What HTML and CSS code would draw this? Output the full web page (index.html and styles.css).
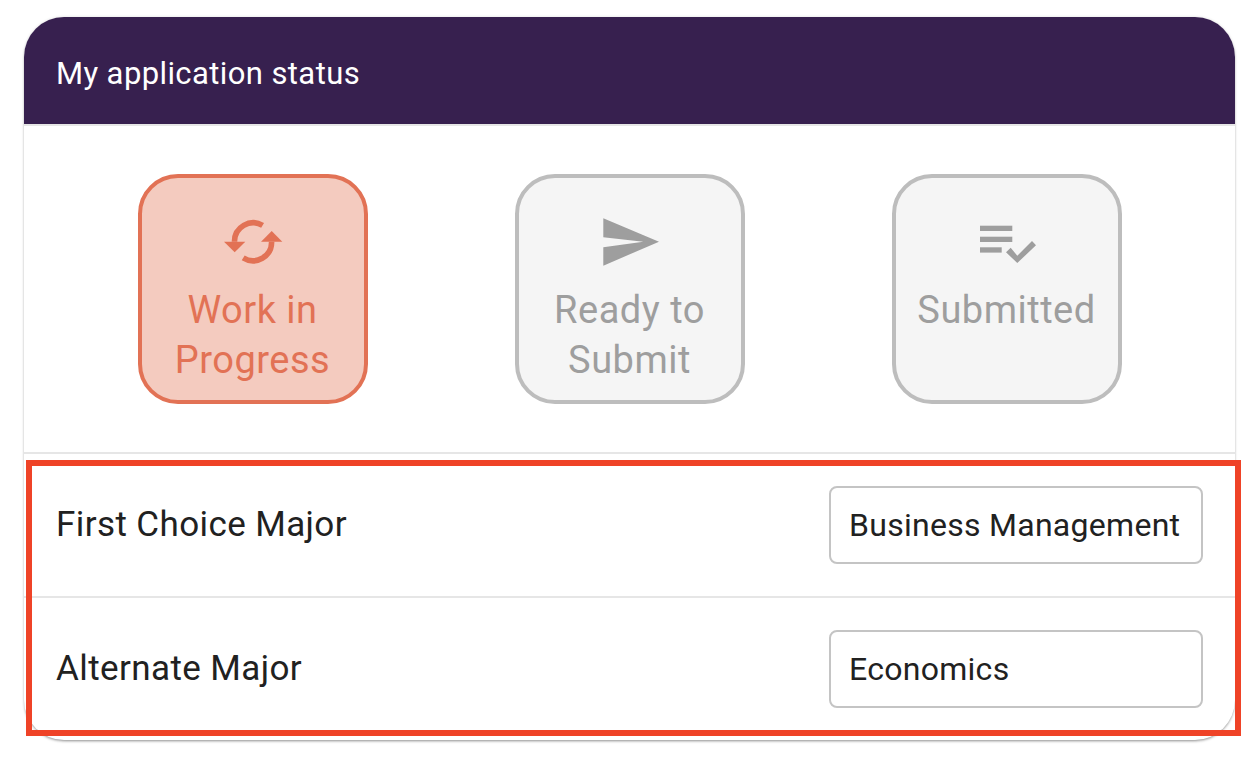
FILE: index.html
```html
<!DOCTYPE html>
<html lang="en">
<head>
<meta charset="utf-8">
<title>My application status</title>
<link rel="stylesheet" href="styles.css">
</head>
<body>
<section class="card">
  <header class="card-header">My application status</header>
  <div class="steps">
    <div class="step step-active">
      <svg class="step-icon" viewBox="0 0 60 60" aria-hidden="true">
        <path class="arc" d="M39.6 13.4A18.6 18.6 0 0 0 11.5 29.7"/>
        <path class="arc" d="M20.2 45.9A18.6 18.6 0 0 0 48.6 29.7"/>
        <polygon class="tip" points="1,29.7 22.3,29.7 11.7,40.3"/>
        <polygon class="tip" points="38,29.7 59.3,29.7 48.7,19"/>
      </svg>
      <span class="step-label">Work in Progress</span>
    </div>
    <div class="step">
      <svg class="step-icon" viewBox="0 0 60 60" aria-hidden="true">
        <polygon class="tip" points="3.3,6.3 59,29.7 3.3,53.7 3.3,35.3 43.3,29.7 3.3,25.3"/>
      </svg>
      <span class="step-label">Ready to Submit</span>
    </div>
    <div class="step">
      <svg class="step-icon" viewBox="0 0 60 60" aria-hidden="true">
        <rect class="tip" x="3" y="13.7" width="32.3" height="5.3"/>
        <rect class="tip" x="3" y="24.7" width="32.3" height="5.3"/>
        <rect class="tip" x="3" y="35.3" width="21.7" height="5.3"/>
        <polygon class="tip" points="29,40.3 33.7,35.7 40.3,43.7 55,29 59,33.3 40.3,51"/>
      </svg>
      <span class="step-label">Submitted</span>
    </div>
  </div>
  <div class="row row-first">
    <span class="row-label">First Choice Major</span>
    <div class="field">Business Management</div>
  </div>
  <div class="row row-second">
    <span class="row-label">Alternate Major</span>
    <div class="field">Economics</div>
  </div>
</section>
<div class="highlight"></div>
</body>
</html>
```
FILE: styles.css
```css
* { box-sizing: border-box; }
html, body { margin: 0; background: #fff; }
body {
  position: relative;
  width: 1260px;
  height: 778px;
  padding: 17px 25px 0 24px;
  font-family: Roboto, "Liberation Sans", sans-serif;
  color: #212121;
  overflow: hidden;
}
.card {
  height: 723px;
  border-radius: 40px;
  background: #fff;
  box-shadow: 0 2px 3px -1px rgba(0, 0, 0, .4), 0 0 3px rgba(0, 0, 0, .14);
  overflow: hidden;
}
.card-header {
  height: 107px;
  padding: 6px 32px 0;
  display: flex;
  align-items: center;
  background: #37204f;
  color: #fff;
  font-size: 31px;
  letter-spacing: .4px;
}
.steps {
  height: 330px;
  display: flex;
  justify-content: center;
  align-items: center;
  gap: 147px;
  border-top: 2px solid #e6e6e6;
  border-bottom: 2px solid #e6e6e6;
}
.step {
  width: 230px;
  height: 230px;
  padding: 34px 8px 0;
  display: flex;
  flex-direction: column;
  align-items: center;
  border: 4px solid #bdbdbd;
  border-radius: 40px;
  background: #f5f5f5;
  color: #9e9e9e;
  fill: #9e9e9e;
  stroke: #9e9e9e;
  text-align: center;
}
.step-active {
  border-color: #e27255;
  background: #f4cbbf;
  color: #e27255;
  fill: #e27255;
  stroke: #e27255;
}
.step-icon { width: 60px; height: 60px; flex: none; margin-bottom: 13px; }
.tip { stroke: none; }
.arc { fill: none; stroke-width: 5.6; }
.step-label { font-size: 38px; line-height: 50px; letter-spacing: .5px; }
.row {
  padding: 0 32px;
  display: flex;
  justify-content: space-between;
  align-items: center;
}
.row-first { height: 142px; }
.row-second { height: 144px; border-top: 2px solid #e6e6e6; }
.row-label { margin-bottom: 2px; font-size: 35px; letter-spacing: .4px; }
.field {
  width: 374px;
  height: 78px;
  padding: 0 18px;
  display: flex;
  align-items: center;
  border: 2px solid #c4c4c4;
  border-radius: 8px;
  font-size: 32px;
  letter-spacing: .28px;
  white-space: nowrap;
}
.highlight {
  position: absolute;
  left: 26px;
  top: 460px;
  width: 1215px;
  height: 276px;
  border: 6px solid #ef4327;
}
```
